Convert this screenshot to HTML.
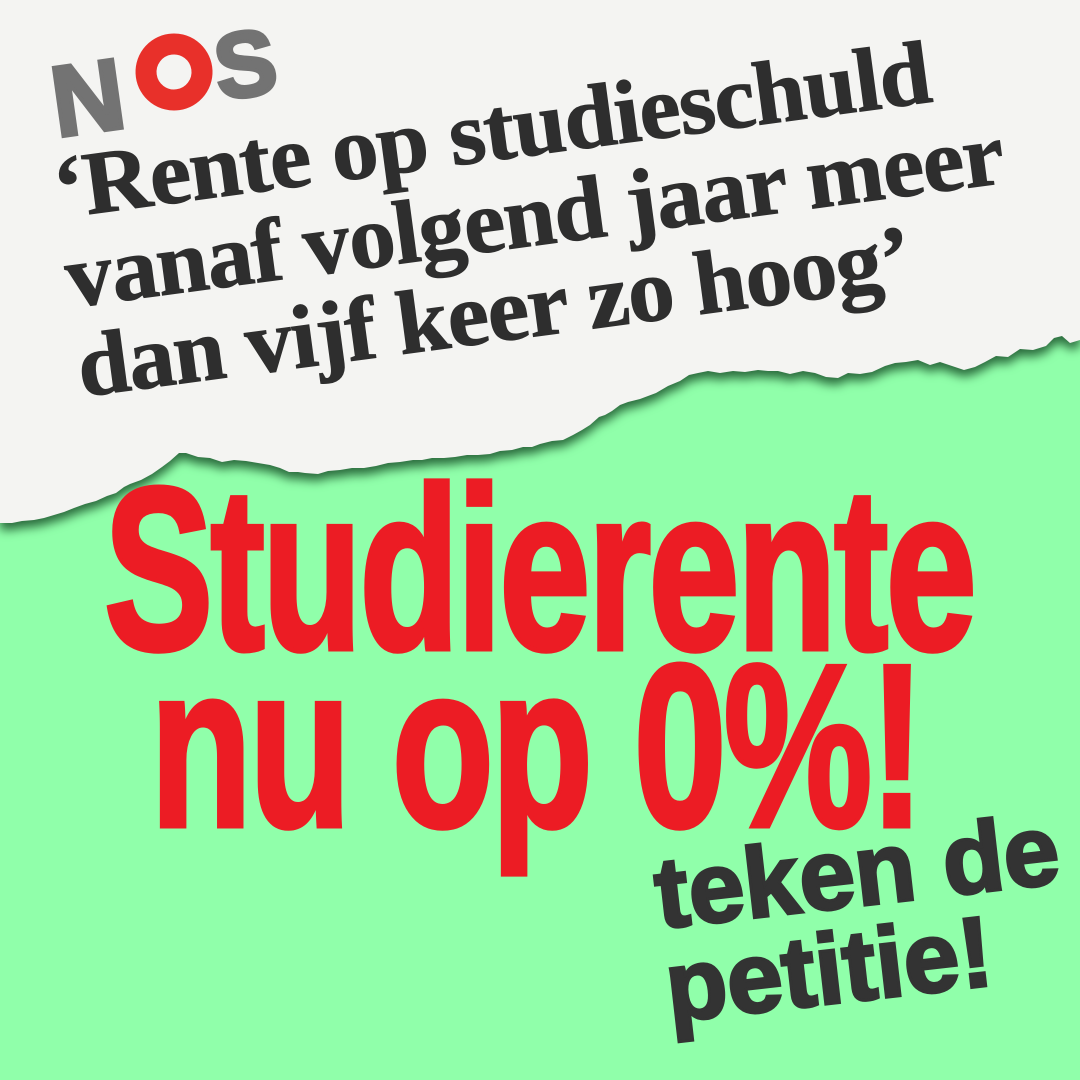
<!DOCTYPE html>
<html><head><meta charset="utf-8">
<style>
html,body{margin:0;padding:0}
body{width:1080px;height:1080px;position:relative;overflow:hidden;background:#90ffaa}
.paper{position:absolute;left:0;top:0;width:1080px;height:1080px;filter:drop-shadow(0 7px 5px rgba(10,60,25,.75))}
.head{position:absolute;left:48px;top:145px;transform-origin:0 0;transform:rotate(-7.6deg) scaleX(1.035);font-family:"Liberation Serif",serif;font-weight:bold;font-size:90px;line-height:90px;color:#2e2e2e;white-space:nowrap;letter-spacing:-1px;-webkit-text-stroke:1px #2e2e2e}
.red{position:absolute;font-family:"Liberation Sans",sans-serif;font-weight:bold;font-size:232px;line-height:232px;color:#ec1c24;white-space:nowrap;transform-origin:0 0;letter-spacing:-4px;-webkit-text-stroke:5px #ec1c24}
.cta{position:absolute;left:650px;top:848px;transform-origin:0 0;transform:rotate(-6.5deg);font-family:"Liberation Sans",sans-serif;font-weight:bold;font-size:100px;line-height:94px;color:#333;white-space:nowrap;letter-spacing:0px;-webkit-text-stroke:3px #333}
</style></head><body>
<svg class="paper" width="1080" height="1080" viewBox="0 0 1080 1080">
<polygon fill="#f4f4f2" points="0,0 1080,0 1080,340 1070,343 1062,336 1054,338 1046,346 1033,350 1020,349 1008,357 996,356 985,362 975,367 964,370 952,366 940,362 930,365 918,360 906,362 895,363 885,366 872,372 860,374 848,373 838,378 826,377 815,373 803,371 790,374 778,371 768,371 758,370 745,372 733,371 720,373 708,371 698,373 689,375 680,381 668,386 656,393 640,399 628,402 620,405 612,411 605,415 599,417 590,425 582,430 573,435 563,440 552,441 540,444 532,447 523,447 512,450 500,451 490,454 478,455 467,455 455,457 444,458 432,458 422,460 413,460 400,462 388,463 376,466 364,468 352,468 340,470 328,471 318,474 305,473 298,472 289,472 280,468 270,465 258,463 246,461 234,460 222,462 210,458 198,457 186,453 179,453 170,461 162,467 152,474 141,480 130,484 124,487 116,493 107,496 96,501 85,504 74,508 64,512 54,515 44,518 34,520 22,521 12,523 0,523"/>
</svg>
<svg style="position:absolute;left:0;top:0" width="320" height="140" viewBox="0 0 320 140">
<g transform="rotate(-8 160 80)">
<text x="50" y="122" font-family="Liberation Sans, sans-serif" font-weight="bold" font-size="100" fill="#737373" stroke="#737373" stroke-width="4">N</text>
<circle cx="175" cy="74" r="28" fill="none" stroke="#e8302a" stroke-width="21"/>
<text x="216" y="108" font-family="Liberation Sans, sans-serif" font-weight="bold" font-size="92" fill="#737373" stroke="#737373" stroke-width="4">S</text>
</g>
</svg>
<div class="head">‘Rente op studieschuld<br>vanaf volgend jaar meer<br>dan vijf keer zo hoog’</div>
<div class="red" style="left:104px;top:454px;transform:scaleX(.706)">Studierente</div>
<div class="red" style="left:150px;top:631px;transform:scaleX(.72)">nu op 0%!</div>
<div class="cta">teken de<br>petitie!</div>
</body></html>
